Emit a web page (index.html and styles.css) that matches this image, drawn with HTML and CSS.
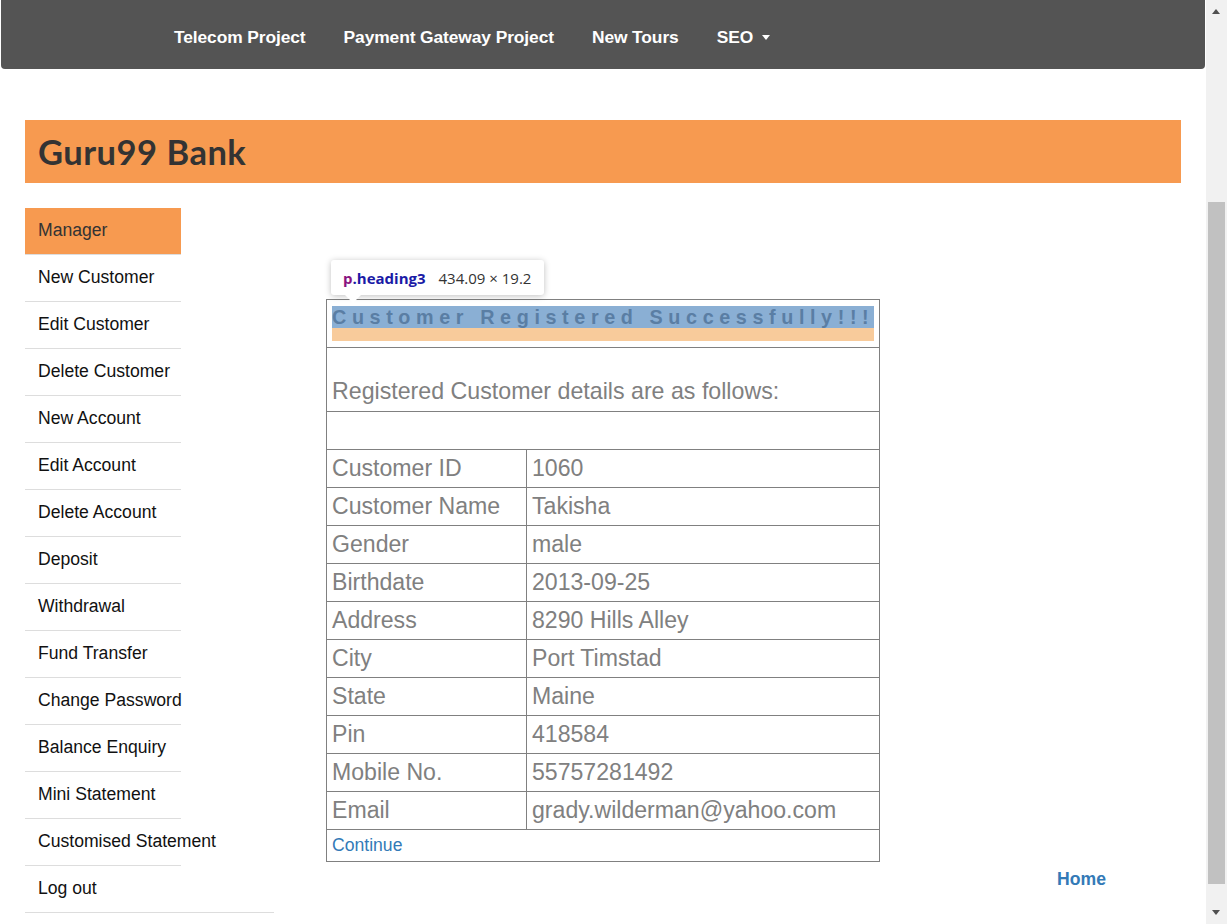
FILE: index.html
```html
<!DOCTYPE html>
<html>
<head>
<meta charset="utf-8">
<title>Guru99 Bank</title>
<link rel="stylesheet" href="styles.css">
</head>
<body>
<div class="page">
  <nav class="navbar">
    <ul class="nav-list">
      <li><a href="#">Telecom Project</a></li>
      <li><a href="#">Payment Gateway Project</a></li>
      <li><a href="#">New Tours</a></li>
      <li><a href="#">SEO <span class="caret"></span></a></li>
    </ul>
  </nav>

  <div class="container">
    <header class="brand">
      <h2 class="brand-title">Guru99 Bank</h2>
    </header>

    <div class="layout">
      <ul class="menu">
        <li class="menu-head">Manager</li>
        <li><a href="#">New Customer</a></li>
        <li><a href="#">Edit Customer</a></li>
        <li><a href="#">Delete Customer</a></li>
        <li><a href="#">New Account</a></li>
        <li><a href="#">Edit Account</a></li>
        <li><a href="#">Delete Account</a></li>
        <li><a href="#">Deposit</a></li>
        <li><a href="#">Withdrawal</a></li>
        <li><a href="#">Fund Transfer</a></li>
        <li><a href="#">Change Password</a></li>
        <li><a href="#">Balance Enquiry</a></li>
        <li><a href="#">Mini Statement</a></li>
        <li><a href="#">Customised Statement</a></li>
        <li class="menu-last"><a href="#">Log out</a></li>
      </ul>

      <main class="main">
        <div class="table-wrap">
          <div class="devtip">
            <span class="tip-tag">p</span><span class="tip-cls">.heading3</span>
            <span class="tip-size">434.09 × 19.2</span>
          </div>
          <table class="details">
            <tr>
              <td colspan="2" class="cell-heading"><p class="heading3">Customer Registered Successfully!!!</p></td>
            </tr>
            <tr>
              <td colspan="2" class="cell-intro">Registered Customer details are as follows:</td>
            </tr>
            <tr><td colspan="2" class="cell-data">&nbsp;</td></tr>
            <tr><td class="cell-data col-label">Customer ID</td><td class="cell-data">1060</td></tr>
            <tr><td class="cell-data col-label">Customer Name</td><td class="cell-data">Takisha</td></tr>
            <tr><td class="cell-data col-label">Gender</td><td class="cell-data">male</td></tr>
            <tr><td class="cell-data col-label">Birthdate</td><td class="cell-data">2013-09-25</td></tr>
            <tr><td class="cell-data col-label">Address</td><td class="cell-data">8290 Hills Alley</td></tr>
            <tr><td class="cell-data col-label">City</td><td class="cell-data">Port Timstad</td></tr>
            <tr><td class="cell-data col-label">State</td><td class="cell-data">Maine</td></tr>
            <tr><td class="cell-data col-label">Pin</td><td class="cell-data">418584</td></tr>
            <tr><td class="cell-data col-label">Mobile No.</td><td class="cell-data">55757281492</td></tr>
            <tr><td class="cell-data col-label">Email</td><td class="cell-data">grady.wilderman@yahoo.com</td></tr>
            <tr><td colspan="2" class="cell-link"><a href="#">Continue</a></td></tr>
          </table>
        </div>
        <div class="home-row"><a href="#" class="home-link">Home</a></div>
      </main>
    </div>
  </div>
</div>

<div class="scrollbar">
  <span class="sb-up"></span>
  <span class="sb-thumb"></span>
  <span class="sb-down"></span>
</div>
</body>
</html>
```

FILE: styles.css
```css
html, body {
  margin: 0;
  padding: 0;
  background: #fff;
}

body {
  font-family: "Liberation Sans", Arial, sans-serif;
  color: #333;
}

.page {
  width: 1206px;
}

a {
  text-decoration: none;
}

/* top navbar */
.navbar {
  margin: 0 1px;
  height: 69px;
  background: #545454;
  border-radius: 0 0 4px 4px;
}

.nav-list {
  list-style: none;
  margin: 0;
  padding: 5px 0 0 173px;
  height: 64px;
  display: flex;
  align-items: center;
  gap: 38px;
}

.nav-list a {
  color: #fff;
  font-weight: bold;
  font-size: 17.4px;
  letter-spacing: -0.1px;
  display: flex;
  align-items: center;
}

.caret {
  display: inline-block;
  width: 0;
  height: 0;
  margin-left: 9px;
  border-top: 5px solid #fff;
  border-left: 4.5px solid transparent;
  border-right: 4.5px solid transparent;
}

/* container */
.container {
  margin: 51px 25px 0 25px;
}

.brand {
  background: #f79a50;
  height: 63px;
  display: flex;
  align-items: center;
  padding-left: 13px;
}

.brand-title {
  margin: 0;
  font-family: "Lato", "Noto Sans", sans-serif;
  font-weight: 700;
  font-size: 34.5px;
  color: #333;
  letter-spacing: 0.5px;
}

.layout {
  display: flex;
  align-items: flex-start;
  margin-top: 25px;
}

/* sidebar menu */
.menu {
  list-style: none;
  margin: 0;
  padding: 0;
  width: 156px;
  flex: none;
}

.menu li {
  height: 46px;
  box-sizing: border-box;
  height: 47px;
  border-bottom: 1px solid #ddd;
  display: flex;
  align-items: center;
  padding: 0 0 2px 13px;
  font-size: 17.6px;
  white-space: nowrap;
}

.menu li a {
  color: #111;
}

.menu .menu-head {
  background: #f79a50;
  color: #333;
}

.menu .menu-last {
  width: 249px;
}

/* main */
.main {
  flex: 1;
  padding: 91px 0 0 145px;
}

.table-wrap {
  position: relative;
  width: 554px;
}

.devtip {
  position: absolute;
  left: 5px;
  top: -39px;
  height: 35px;
  padding: 0 13px 0 12px;
  display: flex;
  align-items: center;
  background: #fff;
  border-radius: 3px;
  box-shadow: 0 1px 6px rgba(0, 0, 0, 0.25);
  font-family: "Open Sans", "Noto Sans", sans-serif;
  font-size: 15px;
  white-space: nowrap;
  z-index: 2;
}

.devtip::after {
  content: "";
  position: absolute;
  left: 14px;
  bottom: -8px;
  border-top: 8px solid #fff;
  border-left: 8px solid transparent;
  border-right: 8px solid transparent;
}

.tip-tag {
  color: #881280;
  font-weight: bold;
}

.tip-cls {
  color: #1a1aa6;
  font-weight: bold;
}

.tip-size {
  color: #333;
  margin-left: 13px;
}

.details {
  width: 554px;
  border-collapse: collapse;
  border: 1px solid #808080;
}

.details td {
  border: 1px solid #808080;
  padding: 0 5px;
  color: #808080;
  vertical-align: middle;
}

.cell-heading {
  padding: 6px 5px 6px 5px !important;
}

.heading3 {
  margin: 0;
  background: #8aafd4;
  border-bottom: 13px solid #f8cb9b;
  color: #5a7ea4;
  font-weight: bold;
  font-size: 19.8px;
  line-height: 22px;
  letter-spacing: 5.6px;
  white-space: nowrap;
}

.cell-intro {
  font-size: 23.2px;
  line-height: 27px;
  padding: 30px 5px 6px 5px !important;
}

.cell-data {
  font-size: 23.1px;
  line-height: 27px;
  height: 27px;
  padding: 5px 5px 5px 5px !important;
}

.col-label {
  width: 189px;
}

.cell-link {
  font-size: 17.6px;
  line-height: 20px;
  padding: 5px 5px 6px 5px !important;
}

.cell-link a {
  color: #337ab7;
}

.home-row {
  display: flex;
  justify-content: flex-end;
  padding-right: 75px;
  margin-top: 7px;
}

.home-link {
  color: #337ab7;
  font-weight: bold;
  font-size: 17.6px;
}

/* fake browser scrollbar */
.scrollbar {
  position: fixed;
  top: 0;
  right: 0;
  width: 21px;
  height: 100%;
  background: #f1f1f1;
}

.sb-up, .sb-down {
  position: absolute;
  left: 6px;
  width: 0;
  height: 0;
  border-left: 4.5px solid transparent;
  border-right: 4.5px solid transparent;
}

.sb-up {
  top: 9px;
  border-bottom: 5px solid #505050;
}

.sb-down {
  bottom: 9px;
  border-top: 5px solid #505050;
}

.sb-thumb {
  position: absolute;
  left: 2px;
  width: 17px;
  top: 202px;
  height: 682px;
  background: #c1c1c1;
}
```
